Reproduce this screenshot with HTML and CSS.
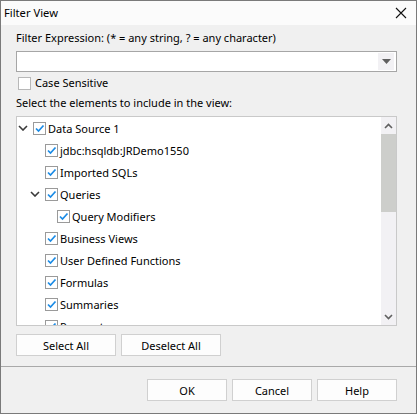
FILE: index.html
```html
<!DOCTYPE html>
<html>
<head>
<meta charset="utf-8">
<link rel="stylesheet" href="styles.css">
</head>
<body>
<div class="dialog">
  <div class="titlebar">
    <span class="title">Filter View</span>
    <svg class="close" width="12" height="12" viewBox="0 0 12 12"><path d="M1 1 L11 11 M11 1 L1 11" stroke="#111" stroke-width="1.1" fill="none"/></svg>
  </div>
  <div class="content">
    <div class="label">Filter Expression: (* = any string, ? = any character)</div>
    <div class="combo">
      <div class="combo-btn"><svg width="9" height="5" viewBox="0 0 9 5"><path d="M0 0 H9 L4.5 5 Z" fill="#606060"/></svg></div>
    </div>
    <div class="case-row">
      <span class="cb cb-plain"></span>
      <span>Case Sensitive</span>
    </div>
    <div class="label label2">Select the elements to include in the view:</div>
    <div class="tree">
      <div class="tree-list">
        <div class="row lv0"><span class="exp"><svg width="10" height="6" viewBox="0 0 10 6"><path d="M1 1 L5 5 L9 1" stroke="#3a3a3a" stroke-width="1.6" fill="none"/></svg></span><span class="cb"><svg width="11" height="11" viewBox="0 0 11 11"><path d="M2 5.5 L4.5 8 L9.5 2.5" stroke="#1a8be6" stroke-width="1.7" fill="none"/></svg></span><span class="txt">Data Source 1</span></div>
        <div class="row lv1"><span class="exp"></span><span class="cb"><svg width="11" height="11" viewBox="0 0 11 11"><path d="M2 5.5 L4.5 8 L9.5 2.5" stroke="#1a8be6" stroke-width="1.7" fill="none"/></svg></span><span class="txt">jdbc:hsqldb:JRDemo1550</span></div>
        <div class="row lv1"><span class="exp"></span><span class="cb"><svg width="11" height="11" viewBox="0 0 11 11"><path d="M2 5.5 L4.5 8 L9.5 2.5" stroke="#1a8be6" stroke-width="1.7" fill="none"/></svg></span><span class="txt">Imported SQLs</span></div>
        <div class="row lv1"><span class="exp"><svg width="10" height="6" viewBox="0 0 10 6"><path d="M1 1 L5 5 L9 1" stroke="#3a3a3a" stroke-width="1.6" fill="none"/></svg></span><span class="cb"><svg width="11" height="11" viewBox="0 0 11 11"><path d="M2 5.5 L4.5 8 L9.5 2.5" stroke="#1a8be6" stroke-width="1.7" fill="none"/></svg></span><span class="txt">Queries</span></div>
        <div class="row lv2"><span class="exp"></span><span class="cb"><svg width="11" height="11" viewBox="0 0 11 11"><path d="M2 5.5 L4.5 8 L9.5 2.5" stroke="#1a8be6" stroke-width="1.7" fill="none"/></svg></span><span class="txt">Query Modifiers</span></div>
        <div class="row lv1"><span class="exp"></span><span class="cb"><svg width="11" height="11" viewBox="0 0 11 11"><path d="M2 5.5 L4.5 8 L9.5 2.5" stroke="#1a8be6" stroke-width="1.7" fill="none"/></svg></span><span class="txt">Business Views</span></div>
        <div class="row lv1"><span class="exp"></span><span class="cb"><svg width="11" height="11" viewBox="0 0 11 11"><path d="M2 5.5 L4.5 8 L9.5 2.5" stroke="#1a8be6" stroke-width="1.7" fill="none"/></svg></span><span class="txt">User Defined Functions</span></div>
        <div class="row lv1"><span class="exp"></span><span class="cb"><svg width="11" height="11" viewBox="0 0 11 11"><path d="M2 5.5 L4.5 8 L9.5 2.5" stroke="#1a8be6" stroke-width="1.7" fill="none"/></svg></span><span class="txt">Formulas</span></div>
        <div class="row lv1"><span class="exp"></span><span class="cb"><svg width="11" height="11" viewBox="0 0 11 11"><path d="M2 5.5 L4.5 8 L9.5 2.5" stroke="#1a8be6" stroke-width="1.7" fill="none"/></svg></span><span class="txt">Summaries</span></div>
        <div class="row lv1"><span class="exp"></span><span class="cb"><svg width="11" height="11" viewBox="0 0 11 11"><path d="M2 5.5 L4.5 8 L9.5 2.5" stroke="#1a8be6" stroke-width="1.7" fill="none"/></svg></span><span class="txt">Parameters</span></div>
      </div>
      <div class="scrollbar">
        <div class="arrow"><svg width="9" height="6" viewBox="0 0 9 6"><path d="M1 5 L4.5 1.5 L8 5" stroke="#606060" stroke-width="1.6" fill="none"/></svg></div>
        <div class="track"><div class="thumb"></div></div>
        <div class="arrow"><svg width="9" height="6" viewBox="0 0 9 6"><path d="M1 1 L4.5 4.5 L8 1" stroke="#606060" stroke-width="1.6" fill="none"/></svg></div>
      </div>
    </div>
    <div class="btn-row">
      <div class="btn wide">Select All</div>
      <div class="btn wide">Deselect All</div>
    </div>
  </div>
  <div class="footer">
    <div class="btn">OK</div>
    <div class="btn">Cancel</div>
    <div class="btn">Help</div>
  </div>
</div>
</body>
</html>
```
FILE: styles.css
```css
html, body {
  margin: 0;
  padding: 0;
}
body {
  font-family: "Noto Sans", "Open Sans", sans-serif;
  font-size: 11px;
  color: #000;
}
.dialog {
  width: 417px;
  height: 414px;
  box-sizing: border-box;
  border: 1px solid #7a7a7a;
  background: #f0f0f0;
  display: flex;
  flex-direction: column;
}
.titlebar {
  height: 24px;
  background: #fbfbfb;
  display: flex;
  align-items: center;
  justify-content: space-between;
  padding: 0 9px 0 3px;
  font-size: 11.2px;
}
.title {
  line-height: 16px;
}
.content {
  padding: 5px 19px 0 15px;
  display: flex;
  flex-direction: column;
}
.label {
  line-height: 16px;
  height: 16px;
}
.combo {
  margin-top: 5px;
  height: 21px;
  box-sizing: border-box;
  border: 1px solid #a6a6a6;
  background: #fff;
  display: flex;
  justify-content: flex-end;
  padding: 1px 2px 1px 0;
}
.combo-btn {
  width: 16px;
  background: #f2f1f4;
  display: flex;
  align-items: center;
  justify-content: center;
}
.case-row {
  margin-top: 3px;
  height: 16px;
  line-height: 16px;
  display: flex;
  align-items: center;
  padding-left: 2px;
  gap: 4px;
}
.label2 {
  margin-top: 4px;
}
.cb {
  width: 13px;
  height: 13px;
  box-sizing: border-box;
  border: 1px solid #9a9a9a;
  background: #fff;
  display: flex;
  align-items: center;
  justify-content: center;
  flex: none;
}
.cb-plain {
  border-color: #b8b8b8;
}
.tree {
  margin-top: 5px;
  height: 210px;
  box-sizing: border-box;
  border: 1px solid #c9c9c9;
  background: #fff;
  display: flex;
}
.tree-list {
  flex: 1;
  overflow: hidden;
}
.row {
  height: 22px;
  display: flex;
  align-items: center;
}
.lv1 { padding-left: 12px; }
.lv2 { padding-left: 24px; }
.exp {
  width: 12px;
  margin-right: 4px;
  display: flex;
  align-items: center;
  justify-content: center;
  flex: none;
}
.txt {
  margin-left: 2px;
  white-space: nowrap;
}
.scrollbar {
  width: 15px;
  background: #f2f1f4;
  display: flex;
  flex-direction: column;
}
.arrow {
  height: 17px;
  display: flex;
  align-items: center;
  justify-content: center;
}
.track {
  flex: 1;
}
.thumb {
  height: 78px;
  background: #cdcecb;
}
.btn-row {
  margin-top: 8px;
  display: flex;
  gap: 5px;
}
.btn {
  width: 80px;
  height: 22px;
  box-sizing: border-box;
  border: 1px solid #d0d0d0;
  background: #fdfdfd;
  display: flex;
  align-items: center;
  justify-content: center;
}
.btn.wide {
  width: 100px;
}
.footer {
  margin-top: 10px;
  border-top: 1px solid #a9a9a9;
  padding: 12px 19px 0 0;
  display: flex;
  justify-content: flex-end;
  gap: 5px;
}
```
